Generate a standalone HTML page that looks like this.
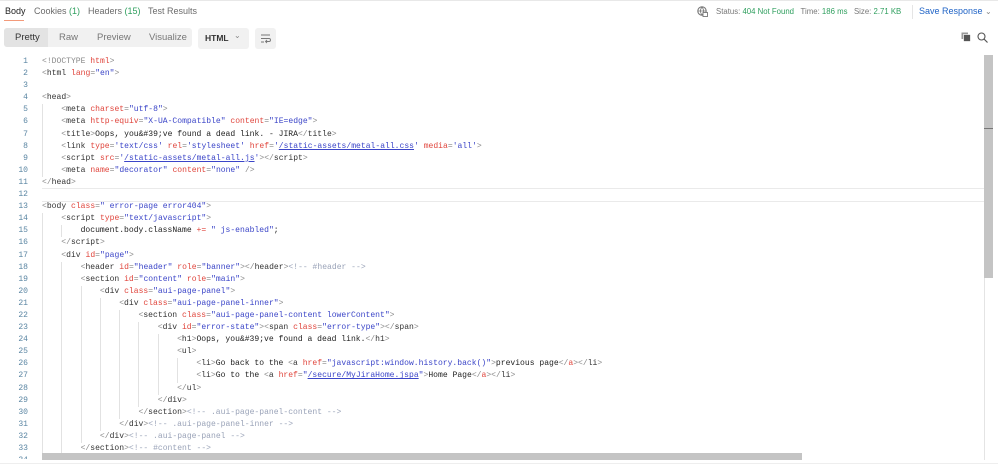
<!DOCTYPE html>
<html><head><style>
body{margin:0;width:998px;height:470px;background:#fff;font-family:"Liberation Sans",sans-serif;position:relative;overflow:hidden}
.abs{position:absolute}
.tab{position:absolute;top:6px;font-size:9px;color:#6b6b6b}
.g{color:#2f9f5e}
.code{position:absolute;left:0;top:56px;font-family:"Liberation Mono",monospace;font-size:8.05px;width:984px}
.ln{height:12.1px;line-height:12.1px;white-space:pre;position:relative}
.n{display:inline-block;width:28px;text-align:right;color:#5b86a3;margin-right:14px}
.i{display:inline-block;width:19.3px;height:12.1px;vertical-align:top;box-shadow:inset 1px 0 0 #e2e2e2}
.p{color:#8a8a8a}.t{color:#333}.a{color:#e0453c}.s{color:#3b45c8}.c{color:#9aa3b8}
.u{color:#3b45c8;text-decoration:underline}.x{color:#222}
</style></head><body>
<div class="abs" style="left:0;top:0;width:998px;height:1px;background:#e8e8e8"></div>
<div class="tab" style="left:5px;color:#222">Body</div>
<div class="abs" style="left:4px;top:20px;width:20px;height:1px;background:#f39a7a"></div>
<div class="tab" style="left:34px">Cookies <span class="g">(1)</span></div>
<div class="tab" style="left:88px">Headers <span class="g">(15)</span></div>
<div class="tab" style="left:148px">Test Results</div>
<svg class="abs" style="left:697px;top:6px" width="11" height="11" viewBox="0 0 11 11"><circle cx="5" cy="5" r="4.2" fill="none" stroke="#777" stroke-width="1.1"/><path d="M1 5h8M5 1c-2 2.5-2 5.5 0 8M5 1c2 2.5 2 5.5 0 8" stroke="#777" fill="none" stroke-width=".8"/><rect x="6" y="6.5" width="4.5" height="4" fill="#fff" stroke="#777" stroke-width=".9"/></svg>
<div class="abs" style="left:716px;top:7px;font-size:7.8px;color:#777">Status: <span class="g">404 Not Found</span>&nbsp;&nbsp;&nbsp;Time: <span class="g">186 ms</span>&nbsp;&nbsp;&nbsp;Size: <span class="g">2.71 KB</span></div>
<div class="abs" style="left:912px;top:5px;width:1px;height:14px;background:#e5e5e5"></div>
<div class="abs" style="left:919px;top:6px;font-size:9px;color:#1f63c6">Save Response <span style="color:#888;font-size:8px">&#8964;</span></div>
<div class="abs" style="left:4px;top:28px;width:188px;height:19px;background:#f1f1f1;border-radius:3px"></div>
<div class="abs" style="left:4px;top:28px;width:44px;height:19px;background:#e3e3e3;border-radius:3px 0 0 3px"></div>
<div class="abs" style="left:15px;top:32px;font-size:9.5px;color:#333">Pretty</div>
<div class="abs" style="left:59px;top:32px;font-size:9.5px;color:#777">Raw</div>
<div class="abs" style="left:97px;top:32px;font-size:9.5px;color:#777">Preview</div>
<div class="abs" style="left:149px;top:32px;font-size:9.5px;color:#777">Visualize</div>
<div class="abs" style="left:198px;top:28px;width:51px;height:21px;background:#f1f1f1;border-radius:3px"></div>
<div class="abs" style="left:205px;top:33px;font-size:8.5px;color:#333;font-weight:bold">HTML</div>
<div class="abs" style="left:234px;top:31px;font-size:8px;color:#888">&#8964;</div>
<div class="abs" style="left:255px;top:28px;width:21px;height:21px;background:#f1f1f1;border-radius:3px"></div>
<svg class="abs" style="left:260px;top:33px" width="11" height="11" viewBox="0 0 11 11"><path d="M1 2h9M1 5.5h8a1.5 1.5 0 0 1 0 3H6M7 7l-1.5 1.5L7 10M1 9h3" stroke="#777" fill="none" stroke-width=".9"/></svg>
<svg class="abs" style="left:961px;top:32px" width="10" height="10" viewBox="0 0 10 10"><rect x="0.5" y="0.5" width="6.5" height="6.5" fill="#999"/><rect x="2.5" y="2.5" width="7" height="7" fill="#555" stroke="#fff" stroke-width=".7"/></svg>
<svg class="abs" style="left:977px;top:32px" width="11" height="11" viewBox="0 0 11 11"><circle cx="4.5" cy="4.5" r="3.5" fill="none" stroke="#555" stroke-width="1.1"/><path d="M7 7l3.5 3.5" stroke="#555" stroke-width="1.2"/></svg>
<div class="abs" style="left:42px;top:188px;width:942px;height:12px;border-top:1px solid #eaeaea;border-bottom:1px solid #eaeaea"></div>
<div class="code">
<div class="ln"><span class="n">1</span><span class="p">&lt;!DOCTYPE </span><span class="a">html</span><span class="p">&gt;</span></div>
<div class="ln"><span class="n">2</span><span class="p">&lt;</span><span class="t">html</span> <span class="a">lang</span><span class="p">=</span><span class="s">"en"</span><span class="p">&gt;</span></div>
<div class="ln"><span class="n">3</span></div>
<div class="ln"><span class="n">4</span><span class="p">&lt;</span><span class="t">head</span><span class="p">&gt;</span></div>
<div class="ln"><span class="n">5</span><span class="i"></span><span class="p">&lt;</span><span class="t">meta</span> <span class="a">charset</span><span class="p">=</span><span class="s">"utf-8"</span><span class="p">&gt;</span></div>
<div class="ln"><span class="n">6</span><span class="i"></span><span class="p">&lt;</span><span class="t">meta</span> <span class="a">http-equiv</span><span class="p">=</span><span class="s">"X-UA-Compatible"</span> <span class="a">content</span><span class="p">=</span><span class="s">"IE=edge"</span><span class="p">&gt;</span></div>
<div class="ln"><span class="n">7</span><span class="i"></span><span class="p">&lt;</span><span class="t">title</span><span class="p">&gt;</span><span class="x">Oops, you&amp;#39;ve found a dead link. - JIRA</span><span class="p">&lt;/</span><span class="t">title</span><span class="p">&gt;</span></div>
<div class="ln"><span class="n">8</span><span class="i"></span><span class="p">&lt;</span><span class="t">link</span> <span class="a">type</span><span class="p">=</span><span class="s">'text/css'</span> <span class="a">rel</span><span class="p">=</span><span class="s">'stylesheet'</span> <span class="a">href</span><span class="p">=</span><span class="s">'<span class="u">/static-assets/metal-all.css</span>'</span> <span class="a">media</span><span class="p">=</span><span class="s">'all'</span><span class="p">&gt;</span></div>
<div class="ln"><span class="n">9</span><span class="i"></span><span class="p">&lt;</span><span class="t">script</span> <span class="a">src</span><span class="p">=</span><span class="s">'<span class="u">/static-assets/metal-all.js</span>'</span><span class="p">&gt;&lt;/</span><span class="t">script</span><span class="p">&gt;</span></div>
<div class="ln"><span class="n">10</span><span class="i"></span><span class="p">&lt;</span><span class="t">meta</span> <span class="a">name</span><span class="p">=</span><span class="s">"decorator"</span> <span class="a">content</span><span class="p">=</span><span class="s">"none"</span> <span class="p">/&gt;</span></div>
<div class="ln"><span class="n">11</span><span class="p">&lt;/</span><span class="t">head</span><span class="p">&gt;</span></div>
<div class="ln"><span class="n">12</span></div>
<div class="ln"><span class="n">13</span><span class="p">&lt;</span><span class="t">body</span> <span class="a">class</span><span class="p">=</span><span class="s">" error-page error404"</span><span class="p">&gt;</span></div>
<div class="ln"><span class="n">14</span><span class="i"></span><span class="p">&lt;</span><span class="t">script</span> <span class="a">type</span><span class="p">=</span><span class="s">"text/javascript"</span><span class="p">&gt;</span></div>
<div class="ln"><span class="n">15</span><span class="i"></span><span class="i"></span><span class="x">document.body.className </span><span class="a">+=</span> <span class="s">" js-enabled"</span><span class="x">;</span></div>
<div class="ln"><span class="n">16</span><span class="i"></span><span class="p">&lt;/</span><span class="t">script</span><span class="p">&gt;</span></div>
<div class="ln"><span class="n">17</span><span class="i"></span><span class="p">&lt;</span><span class="t">div</span> <span class="a">id</span><span class="p">=</span><span class="s">"page"</span><span class="p">&gt;</span></div>
<div class="ln"><span class="n">18</span><span class="i"></span><span class="i"></span><span class="p">&lt;</span><span class="t">header</span> <span class="a">id</span><span class="p">=</span><span class="s">"header"</span> <span class="a">role</span><span class="p">=</span><span class="s">"banner"</span><span class="p">&gt;&lt;/</span><span class="t">header</span><span class="p">&gt;</span><span class="c">&lt;!-- #header --&gt;</span></div>
<div class="ln"><span class="n">19</span><span class="i"></span><span class="i"></span><span class="p">&lt;</span><span class="t">section</span> <span class="a">id</span><span class="p">=</span><span class="s">"content"</span> <span class="a">role</span><span class="p">=</span><span class="s">"main"</span><span class="p">&gt;</span></div>
<div class="ln"><span class="n">20</span><span class="i"></span><span class="i"></span><span class="i"></span><span class="p">&lt;</span><span class="t">div</span> <span class="a">class</span><span class="p">=</span><span class="s">"aui-page-panel"</span><span class="p">&gt;</span></div>
<div class="ln"><span class="n">21</span><span class="i"></span><span class="i"></span><span class="i"></span><span class="i"></span><span class="p">&lt;</span><span class="t">div</span> <span class="a">class</span><span class="p">=</span><span class="s">"aui-page-panel-inner"</span><span class="p">&gt;</span></div>
<div class="ln"><span class="n">22</span><span class="i"></span><span class="i"></span><span class="i"></span><span class="i"></span><span class="i"></span><span class="p">&lt;</span><span class="t">section</span> <span class="a">class</span><span class="p">=</span><span class="s">"aui-page-panel-content lowerContent"</span><span class="p">&gt;</span></div>
<div class="ln"><span class="n">23</span><span class="i"></span><span class="i"></span><span class="i"></span><span class="i"></span><span class="i"></span><span class="i"></span><span class="p">&lt;</span><span class="t">div</span> <span class="a">id</span><span class="p">=</span><span class="s">"error-state"</span><span class="p">&gt;&lt;</span><span class="t">span</span> <span class="a">class</span><span class="p">=</span><span class="s">"error-type"</span><span class="p">&gt;&lt;/</span><span class="t">span</span><span class="p">&gt;</span></div>
<div class="ln"><span class="n">24</span><span class="i"></span><span class="i"></span><span class="i"></span><span class="i"></span><span class="i"></span><span class="i"></span><span class="i"></span><span class="p">&lt;</span><span class="t">h1</span><span class="p">&gt;</span><span class="x">Oops, you&amp;#39;ve found a dead link.</span><span class="p">&lt;/</span><span class="t">h1</span><span class="p">&gt;</span></div>
<div class="ln"><span class="n">25</span><span class="i"></span><span class="i"></span><span class="i"></span><span class="i"></span><span class="i"></span><span class="i"></span><span class="i"></span><span class="p">&lt;</span><span class="t">ul</span><span class="p">&gt;</span></div>
<div class="ln"><span class="n">26</span><span class="i"></span><span class="i"></span><span class="i"></span><span class="i"></span><span class="i"></span><span class="i"></span><span class="i"></span><span class="i"></span><span class="p">&lt;</span><span class="t">li</span><span class="p">&gt;</span><span class="x">Go back to the </span><span class="p">&lt;</span><span class="t">a</span> <span class="a">href</span><span class="p">=</span><span class="s">"javascript:window.history.back()"</span><span class="p">&gt;</span><span class="x">previous page</span><span class="p">&lt;/</span><span class="a">a</span><span class="p">&gt;&lt;/</span><span class="t">li</span><span class="p">&gt;</span></div>
<div class="ln"><span class="n">27</span><span class="i"></span><span class="i"></span><span class="i"></span><span class="i"></span><span class="i"></span><span class="i"></span><span class="i"></span><span class="i"></span><span class="p">&lt;</span><span class="t">li</span><span class="p">&gt;</span><span class="x">Go to the </span><span class="p">&lt;</span><span class="t">a</span> <span class="a">href</span><span class="p">=</span><span class="s">"<span class="u">/secure/MyJiraHome.jspa</span>"</span><span class="p">&gt;</span><span class="x">Home Page</span><span class="p">&lt;/</span><span class="a">a</span><span class="p">&gt;&lt;/</span><span class="t">li</span><span class="p">&gt;</span></div>
<div class="ln"><span class="n">28</span><span class="i"></span><span class="i"></span><span class="i"></span><span class="i"></span><span class="i"></span><span class="i"></span><span class="i"></span><span class="p">&lt;/</span><span class="t">ul</span><span class="p">&gt;</span></div>
<div class="ln"><span class="n">29</span><span class="i"></span><span class="i"></span><span class="i"></span><span class="i"></span><span class="i"></span><span class="i"></span><span class="p">&lt;/</span><span class="t">div</span><span class="p">&gt;</span></div>
<div class="ln"><span class="n">30</span><span class="i"></span><span class="i"></span><span class="i"></span><span class="i"></span><span class="i"></span><span class="p">&lt;/</span><span class="t">section</span><span class="p">&gt;</span><span class="c">&lt;!-- .aui-page-panel-content --&gt;</span></div>
<div class="ln"><span class="n">31</span><span class="i"></span><span class="i"></span><span class="i"></span><span class="i"></span><span class="p">&lt;/</span><span class="t">div</span><span class="p">&gt;</span><span class="c">&lt;!-- .aui-page-panel-inner --&gt;</span></div>
<div class="ln"><span class="n">32</span><span class="i"></span><span class="i"></span><span class="i"></span><span class="p">&lt;/</span><span class="t">div</span><span class="p">&gt;</span><span class="c">&lt;!-- .aui-page-panel --&gt;</span></div>
<div class="ln"><span class="n">33</span><span class="i"></span><span class="i"></span><span class="p">&lt;/</span><span class="t">section</span><span class="p">&gt;</span><span class="c">&lt;!-- #content --&gt;</span></div>
<div class="ln"><span class="n">34</span><span class="i"></span><span class="i"></span><span class="p">&lt;</span><span class="t">footer</span> <span class="a">id</span><span class="p">=</span><span class="s">"footer"</span> <span class="a">role</span><span class="p">=</span><span class="s">"contentinfo"</span><span class="p">&gt;</span></div>
</div>
<div class="abs" style="left:0;top:459px;width:998px;height:11px;background:#fff"></div>
<div class="abs" style="left:42px;top:453px;width:760px;height:7px;background:#c4c4c4"></div>
<div class="abs" style="left:984px;top:55px;width:1px;height:405px;background:#e4e4e4"></div>
<div class="abs" style="left:984px;top:55px;width:9px;height:223px;background:#c4c4c4"></div>
<div class="abs" style="left:984px;top:128px;width:9px;height:1px;background:#777"></div>
<div class="abs" style="left:0;top:463px;width:998px;height:1px;background:#eee"></div>
</body></html>
